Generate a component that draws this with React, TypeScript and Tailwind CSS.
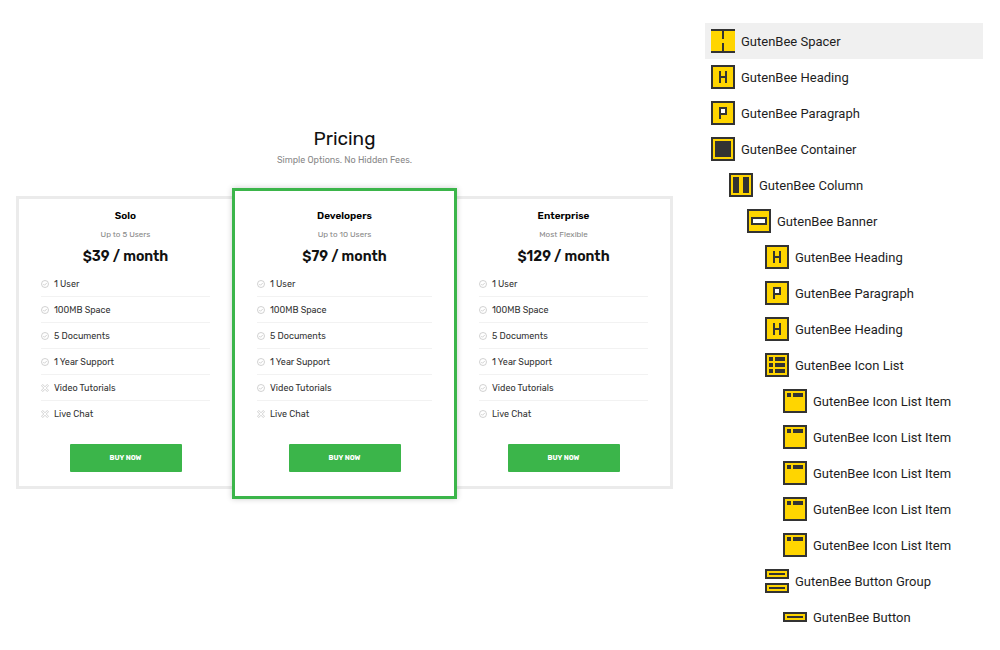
import type { ReactNode } from "react";

const DARK = "#333333";
const YELLOW = "#ffd500";

type Glyph =
  | "spacer"
  | "heading"
  | "paragraph"
  | "container"
  | "column"
  | "banner"
  | "iconList"
  | "iconListItem"
  | "buttonGroup"
  | "button";

const Frame = ({ children }: { children?: ReactNode }) => (
  <>
    <path fill={DARK} d="M0 0h24v24H0z" />
    <path fill={YELLOW} d="M2 2h20v20H2z" />
    {children}
  </>
);

const glyphs: Record<Glyph, ReactNode> = {
  spacer: (
    <>
      <path fill={YELLOW} d="M0 0h24v24H0z" />
      <path fill={DARK} d="M0 0h24v2H13v8h-2V2H0zM0 24h24v-2H13v-8h-2v8H0z" />
    </>
  ),
  heading: (
    <Frame>
      <path fill={DARK} d="M8 6h2v5h4V6h2v12h-2v-5h-4v5H8z" />
    </Frame>
  ),
  paragraph: (
    <Frame>
      <path fill={DARK} d="M8 6h8v8h-6v4H8z" />
      <path fill="#fff" d="M10 8h4v4h-4z" />
    </Frame>
  ),
  container: (
    <Frame>
      <path fill={DARK} d="M4 4h16v16H4z" />
    </Frame>
  ),
  column: (
    <Frame>
      <path fill={DARK} d="M4 4h6v16H4zM14 4h6v16h-6z" />
    </Frame>
  ),
  banner: (
    <Frame>
      <path fill={DARK} d="M4 8h16v8H4z" />
      <path fill="#fff" d="M6 10h12v4H6z" />
    </Frame>
  ),
  iconList: (
    <Frame>
      <path
        fill={DARK}
        d="M4 4h4v4H4zM10 4h10v4H10zM4 10h4v4H4zM10 10h10v4H10zM4 16h4v4H4zM10 16h10v4H10z"
      />
    </Frame>
  ),
  iconListItem: (
    <Frame>
      <path fill={DARK} d="M4 4h4v4H4zM10 4h10v4H10z" />
    </Frame>
  ),
  buttonGroup: (
    <>
      <path fill={DARK} d="M0 0h24v10H0zM0 14h24v10H0z" />
      <path fill={YELLOW} d="M2 2h20v6H2zM2 16h20v6H2z" />
      <path fill={DARK} d="M4 4h16v2H4zM4 18h16v2H4z" />
    </>
  ),
  button: (
    <>
      <path fill={DARK} d="M0 7h24v10H0z" />
      <path fill={YELLOW} d="M2 9h20v6H2z" />
      <path fill={DARK} d="M4 11h16v2H4z" />
    </>
  ),
};

type Block = { label: string; glyph: Glyph; indent: string; active?: boolean };

const levels = ["pl-[6px]", "pl-[24px]", "pl-[42px]", "pl-[60px]", "pl-[78px]"];

const listItem: Block = { label: "Icon List Item", glyph: "iconListItem", indent: levels[4] };

const blocks: Block[] = [
  { label: "Spacer", glyph: "spacer", indent: levels[0], active: true },
  { label: "Heading", glyph: "heading", indent: levels[0] },
  { label: "Paragraph", glyph: "paragraph", indent: levels[0] },
  { label: "Container", glyph: "container", indent: levels[0] },
  { label: "Column", glyph: "column", indent: levels[1] },
  { label: "Banner", glyph: "banner", indent: levels[2] },
  { label: "Heading", glyph: "heading", indent: levels[3] },
  { label: "Paragraph", glyph: "paragraph", indent: levels[3] },
  { label: "Heading", glyph: "heading", indent: levels[3] },
  { label: "Icon List", glyph: "iconList", indent: levels[3] },
  listItem,
  listItem,
  listItem,
  listItem,
  listItem,
  { label: "Button Group", glyph: "buttonGroup", indent: levels[3] },
  { label: "Button", glyph: "button", indent: levels[4] },
];

const features = [
  "1 User",
  "100MB Space",
  "5 Documents",
  "1 Year Support",
  "Video Tutorials",
  "Live Chat",
];

type Plan = {
  name: string;
  note: string;
  price: string;
  included: number;
  frame: string;
};

const plans: Plan[] = [
  {
    name: "Solo",
    note: "Up to 5 Users",
    price: "$39 / month",
    included: 4,
    frame: "border-[#ebebeb] pt-2 pb-[14px]",
  },
  {
    name: "Developers",
    note: "Up to 10 Users",
    price: "$79 / month",
    included: 5,
    frame:
      "relative -mx-[3px] -mt-2 -mb-[10px] border-[#3bb54a] pt-4 pb-6 shadow-[0_0_6px_rgba(0,0,0,0.2)]",
  },
  {
    name: "Enterprise",
    note: "Most Flexible",
    price: "$129 / month",
    included: 6,
    frame: "border-[#ebebeb] pt-2 pb-[14px]",
  },
];

function Mark({ included }: { included: boolean }) {
  return (
    <svg
      viewBox="0 0 16 16"
      className="size-2 shrink-0"
      fill="none"
      stroke="#b4b4b4"
      strokeWidth="1.2"
      aria-hidden="true"
    >
      {included ? (
        <>
          <circle cx="8" cy="8" r="7" />
          <path d="M4.5 8l2.5 2.5L11.5 6" />
        </>
      ) : (
        <path d="M1 3.5L3.5 1 8 5.5 12.5 1 15 3.5 10.5 8 15 12.5 12.5 15 8 10.5 3.5 15 1 12.5 5.5 8z" />
      )}
    </svg>
  );
}

function PlanCard({ plan }: { plan: Plan }) {
  return (
    <article className={`flex flex-col border-[3px] bg-white px-[22px] ${plan.frame}`}>
      <h2 className="text-center text-[10px] leading-[19px] font-semibold text-black">
        {plan.name}
      </h2>
      <p className="text-center text-[8px] leading-[18px] text-[#888888]">{plan.note}</p>
      <p className="text-center text-[14px] leading-[25px] font-semibold text-[#111111]">
        {plan.price}
      </p>
      <ul className="mt-[2px]">
        {features.map((feature, i) => (
          <li
            key={feature}
            className="flex h-[26px] items-center gap-[5px] border-b border-[#f2f2f2] text-[9px] text-[#333333] last:border-transparent"
          >
            <Mark included={i < plan.included} />
            <span className="pt-[2px]">{feature}</span>
          </li>
        ))}
      </ul>
      <button
        type="button"
        className="mt-[17px] h-7 w-28 self-center rounded-[1px] bg-[#3bb54a] text-[7px] font-bold text-white"
      >
        BUY NOW
      </button>
    </article>
  );
}

export default function App() {
  return (
    <div className="flex min-h-screen items-start gap-8 bg-white pr-[17px] pl-4 font-['Roboto',sans-serif]">
      <main className="min-w-0 flex-1 pt-[125px] font-['Rubik','Roboto',sans-serif]">
        <header className="mb-7 text-center">
          <h1 className="text-[19px] leading-[27px] text-[#111111]">Pricing</h1>
          <p className="text-[9px] leading-[16px] text-[#888888]">
            Simple Options. No Hidden Fees.
          </p>
        </header>
        <div className="grid grid-cols-3">
          {plans.map((plan) => (
            <PlanCard key={plan.name} plan={plan} />
          ))}
        </div>
      </main>
      <nav className="w-[278px] shrink-0 pt-[23px]" aria-label="Blocks">
        <ul>
          {blocks.map((block, i) => (
            <li key={i}>
              <button
                type="button"
                className={`flex h-9 w-full items-center gap-[6px] text-left text-[13px] text-[#1e1e1e] ${block.indent} ${block.active ? "bg-[#f0f0f0]" : ""}`}
              >
                <svg
                  viewBox="0 0 24 24"
                  className="size-6 shrink-0"
                  shapeRendering="crispEdges"
                  aria-hidden="true"
                >
                  {glyphs[block.glyph]}
                </svg>
                <span className="pt-[2px]">GutenBee {block.label}</span>
              </button>
            </li>
          ))}
        </ul>
      </nav>
    </div>
  );
}
